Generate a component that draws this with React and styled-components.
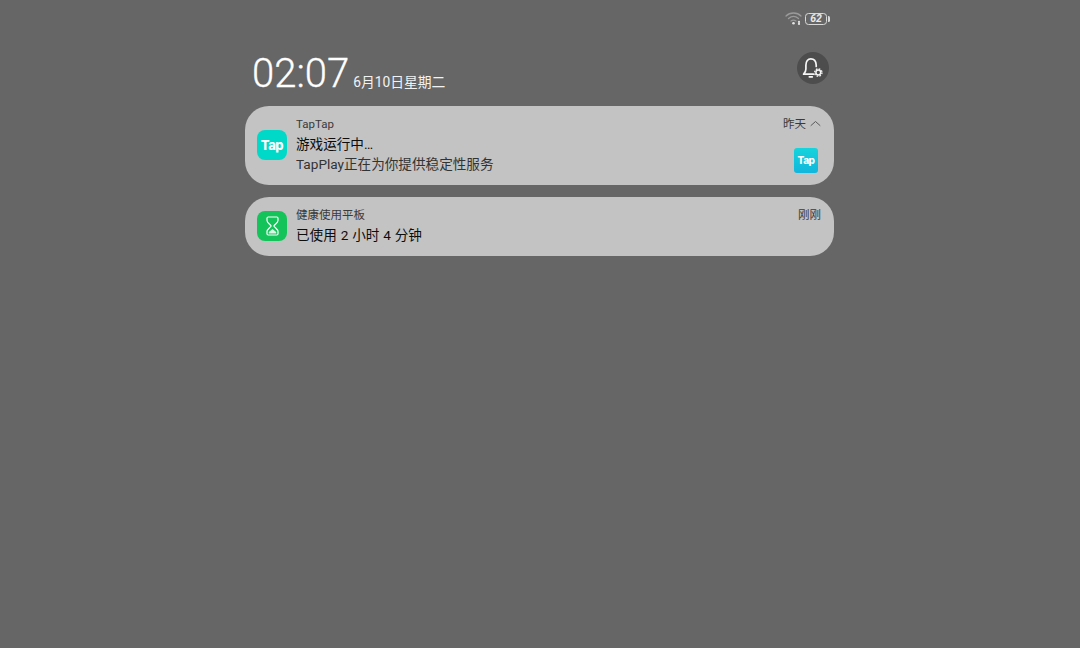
import React from "react";
import styled, { createGlobalStyle } from "styled-components";

const Global = createGlobalStyle`
  html, body { margin: 0; padding: 0; background: #666666; }
  body { font-family: Roboto, "Noto Sans CJK SC", sans-serif; }
`;

const Page = styled.div`
  width: 1080px;
  height: 648px;
  background: #666666;
  padding-left: 245px;
  box-sizing: border-box;
  overflow: hidden;
`;

const Column = styled.div`
  width: 589px;
  display: flex;
  flex-direction: column;
`;

const StatusBar = styled.div`
  height: 26px;
  padding: 11px 7px 0 0;
  box-sizing: border-box;
  display: flex;
  justify-content: flex-end;
  align-items: flex-start;
  gap: 3px;
`;

const Battery = styled.div`
  width: 22px;
  height: 12px;
  margin-top: 2px;
  box-sizing: border-box;
  border: 1px solid #d8d8d8;
  border-radius: 3.5px;
  color: #e8e8e8;
  font: italic 700 10.5px/10px Roboto, sans-serif;
  text-align: center;
  position: relative;
  &::after {
    content: "";
    position: absolute;
    right: -4px;
    top: 2px;
    width: 2px;
    height: 6px;
    border-radius: 0 1.5px 1.5px 0;
    background: #d8d8d8;
  }
`;

const Header = styled.div`
  height: 80px;
  padding: 0 5px 0 7px;
  display: flex;
  justify-content: space-between;
  align-items: flex-start;
`;

const Clock = styled.div`
  display: flex;
  align-items: baseline;
  gap: 4px;
  margin-top: 24px;
  color: #ffffff;
`;

const Time = styled.span`
  font: 300 40px/47px Roboto, sans-serif;
  -webkit-text-stroke: 0.3px #ffffff;
`;

const DateText = styled.span`
  font: 400 13.8px/18px Roboto, "Noto Sans CJK SC", sans-serif;
  color: #f2f2f2;
`;

const BellButton = styled.div`
  width: 32px;
  height: 32px;
  margin-top: 26px;
  border-radius: 50%;
  background: #4d4d4d;
  display: flex;
  align-items: center;
  justify-content: center;
`;

const Cards = styled.div`
  display: flex;
  flex-direction: column;
  gap: 12px;
`;

const Card = styled.div`
  height: ${(p) => p.$h}px;
  box-sizing: border-box;
  background: #c3c3c3;
  border-radius: 24px;
  padding: 0 13px 0 12px;
  display: flex;
  align-items: center;
  gap: 9px;
  color: #222222;
`;

const AppIcon = styled.div`
  flex: none;
  width: 30px;
  height: 30px;
  margin-bottom: 1px;
  border-radius: 8px;
  background: ${(p) => p.$bg};
  display: flex;
  align-items: center;
  justify-content: center;
`;

const TapMark = styled.span`
  color: #ffffff;
  font: 800 ${(p) => p.$size}px/1 Inter, Roboto, sans-serif;
  letter-spacing: -0.5px;
`;

const Body = styled.div`
  flex: 1;
  min-width: 0;
  margin-bottom: 4px;
  display: flex;
  flex-direction: column;
`;

const TitleRow = styled.div`
  display: flex;
  justify-content: space-between;
  align-items: center;
  height: 20px;
`;

const AppName = styled.span`
  font: 400 11.5px/16px Roboto, "Noto Sans CJK SC", sans-serif;
  color: #3a3a3a;
`;

const Meta = styled.span`
  display: flex;
  align-items: center;
  gap: 4px;
  font: 400 11.5px/16px Roboto, "Noto Sans CJK SC", sans-serif;
  color: #3a3a3a;
`;

const ContentRow = styled.div`
  display: flex;
  justify-content: space-between;
  align-items: flex-start;
`;

const Lines = styled.div`
  display: flex;
  flex-direction: column;
`;

const Headline = styled.div`
  font: 400 13.6px/20px Roboto, "Noto Sans CJK SC", sans-serif;
  word-spacing: 0.5px;
  color: #0d0d0d;
`;

const SubLine = styled.div`
  font: 400 13.6px/20px Roboto, "Noto Sans CJK SC", sans-serif;
  color: #333333;
`;

const Thumb = styled.div`
  width: 24px;
  height: 25px;
  margin: 14px 3px 0 0;
  border-radius: 3px;
  background: linear-gradient(180deg, #15d4dc 0%, #12b6dc 100%);
  display: flex;
  align-items: center;
  justify-content: center;
`;

const Wifi = () => (
  <svg width="17" height="14" viewBox="0 0 17 14" fill="none" stroke="#9a9a9a" strokeWidth="1.3" strokeLinecap="round">
    <path d="M1 5 C5 1 12 1 16 5" />
    <path d="M3.5 7.5 C6.5 5 10.5 5 13.5 7.5" />
    <path d="M6 10 C7.5 9 9.5 9 11 10" />
    <circle cx="8.5" cy="12.3" r="1.3" fill="#e4e4e4" stroke="none" />
    <circle cx="14" cy="10.9" r="1.1" fill="#e4e4e4" stroke="none" />
    <circle cx="14" cy="12.9" r="1.1" fill="#e4e4e4" stroke="none" />
  </svg>
);

const BellGear = () => (
  <svg width="24" height="24" viewBox="0 0 24 24" fill="none" stroke="#f6f6f6" strokeWidth="1.7" strokeLinecap="round" strokeLinejoin="round">
    <path d="M12.5 18.2 H2.6 C4.3 16.6 4.9 15.2 4.9 13 V9.2 C4.9 5 7 2.8 9.8 2.8 C12.8 2.8 15 5 15.2 9 V10.4" />
    <path d="M8.3 20.8 H11.3" />
    <circle cx="17.3" cy="16.5" r="3.7" strokeWidth="1.3" strokeLinecap="butt" strokeDasharray="1.6 1.3" />
    <circle cx="17.3" cy="16.5" r="2.4" strokeWidth="1.5" />
  </svg>
);

const Chevron = () => (
  <svg width="11" height="7" viewBox="0 0 11 7" fill="none" stroke="#5a5a5a" strokeWidth="1" strokeLinecap="round" strokeLinejoin="round">
    <path d="M1 5.5 L5.5 1.5 L10 5.5" />
  </svg>
);

const Hourglass = () => (
  <svg width="13" height="20" viewBox="0 0 13 20" fill="none" stroke="#ffffff" strokeWidth="1.2" strokeLinecap="round" strokeLinejoin="round">
    <path d="M2.2 1 H10.8 C11.6 1 12 1.4 12 2.2 V4.5 C12 6.7 9 8.3 7.8 10 C9 11.7 12 13.3 12 15.5 V17.8 C12 18.6 11.6 19 10.8 19 H2.2 C1.4 19 1 18.6 1 17.8 V15.5 C1 13.3 4 11.7 5.2 10 C4 8.3 1 6.7 1 4.5 V2.2 C1 1.4 1.4 1 2.2 1 Z" />
    <path d="M2.8 17.4 V16 L6.5 13 L10.2 16 V17.4 Z" fill="#ffffff" fillOpacity="0.85" stroke="none" />
  </svg>
);

export default function App() {
  return (
    <Page>
      <Global />
      <Column>
        <StatusBar>
          <Wifi />
          <Battery>62</Battery>
        </StatusBar>
        <Header>
          <Clock>
            <Time>02:07</Time>
            <DateText>6月10日星期二</DateText>
          </Clock>
          <BellButton>
            <BellGear />
          </BellButton>
        </Header>
        <Cards>
          <Card $h={79}>
            <AppIcon $bg="#00d8c8">
              <TapMark $size={13}>Tap</TapMark>
            </AppIcon>
            <Body>
              <TitleRow>
                <AppName>TapTap</AppName>
                <Meta>
                  昨天
                  <Chevron />
                </Meta>
              </TitleRow>
              <ContentRow>
                <Lines>
                  <Headline>游戏运行中…</Headline>
                  <SubLine>TapPlay正在为你提供稳定性服务</SubLine>
                </Lines>
                <Thumb>
                  <TapMark $size={10}>Tap</TapMark>
                </Thumb>
              </ContentRow>
            </Body>
          </Card>
          <Card $h={59}>
            <AppIcon $bg="#14c35a">
              <Hourglass />
            </AppIcon>
            <Body>
              <TitleRow>
                <AppName>健康使用平板</AppName>
                <Meta>刚刚</Meta>
              </TitleRow>
              <Headline>已使用 2 小时 4 分钟</Headline>
            </Body>
          </Card>
        </Cards>
      </Column>
    </Page>
  );
}
